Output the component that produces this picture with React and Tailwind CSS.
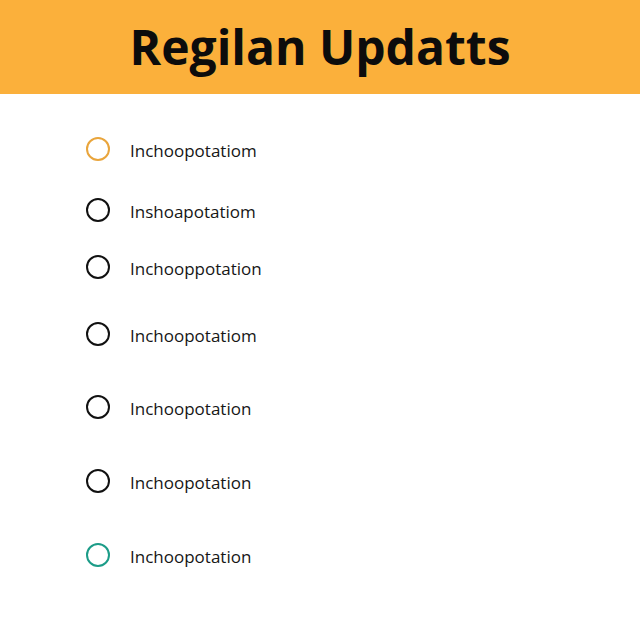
import React from 'react';

const ITEMS = [
  { label: 'Inchoopotatiom', ring: 'border-[#e9a53c]', gap: 'mt-[43px]' },
  { label: 'Inshoapotatiom', ring: 'border-[#111111]', gap: 'mt-[37px]' },
  { label: 'Inchooppotation', ring: 'border-[#111111]', gap: 'mt-[33px]' },
  { label: 'Inchoopotatiom', ring: 'border-[#111111]', gap: 'mt-[43px]' },
  { label: 'Inchoopotation', ring: 'border-[#111111]', gap: 'mt-[49px]' },
  { label: 'Inchoopotation', ring: 'border-[#111111]', gap: 'mt-[50px]' },
  { label: 'Inchoopotation', ring: 'border-[#1c9c88]', gap: 'mt-[50px]' },
];

export default function App() {
  return (
    <div className="w-[640px] h-[640px] bg-white font-['Open_Sans',sans-serif] overflow-hidden">
      {/* Header */}
      <div className="h-[94px] bg-[#fbb03b] flex items-center justify-center">
        <h1 className="text-[48px] font-bold text-[#0c0c0c] leading-none">
          Regilan Updatts
        </h1>
      </div>

      {/* List */}
      <ul className="pl-[86px] flex flex-col">
        {ITEMS.map((it, i) => (
          <li key={i} className={`${it.gap} h-6 flex items-center gap-5`}>
            <span className={`w-6 h-6 rounded-full border-2 ${it.ring}`} />
            <span className="text-[17px] text-[#161616] leading-none pt-[3px]">{it.label}</span>
          </li>
        ))}
      </ul>
    </div>
  );
}
